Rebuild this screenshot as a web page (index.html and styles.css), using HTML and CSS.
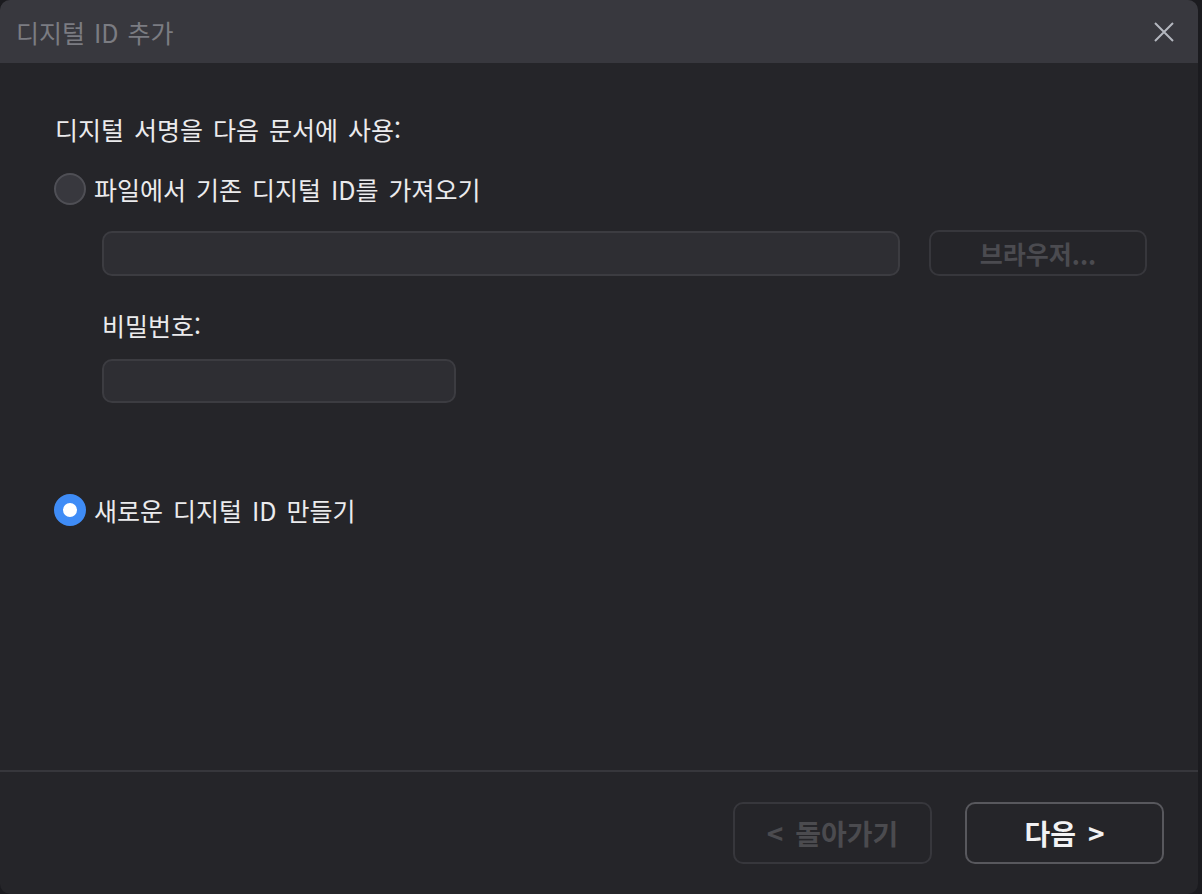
FILE: index.html
```html
<!DOCTYPE html>
<html lang="ko">
<head>
    <meta charset="UTF-8">
    <title>디지털 ID 추가</title>
    <link rel="stylesheet" href="styles.css">
</head>
<body>

<div class="dialog">
    <div class="titlebar">
        <span class="title">디지털 ID 추가</span>
        <button class="close" aria-label="닫기">
            <svg width="20" height="20" viewBox="0 0 20 20">
                <path d="M1 1 L19 19 M19 1 L1 19" stroke="#b4b7bf" stroke-width="2" fill="none"/>
            </svg>
        </button>
    </div>

    <div class="content">
        <p class="intro">디지털 서명을 다음 문서에 사용:</p>

        <label class="option">
            <span class="radio"></span>
            <span>파일에서 기존 디지털 ID를 가져오기</span>
        </label>

        <div class="file-group">
            <div class="file-row">
                <div class="field wide"></div>
                <button class="btn btn-browse" disabled>브라우저...</button>
            </div>
            <div class="label">비밀번호:</div>
            <div class="field short"></div>
        </div>

        <label class="option selected">
            <span class="radio"></span>
            <span>새로운 디지털 ID 만들기</span>
        </label>
    </div>

    <div class="footer">
        <button class="btn btn-nav disabled">&lt; 돌아가기</button>
        <button class="btn btn-nav next">다음 &gt;</button>
    </div>
</div>

</body>
</html>
```

FILE: styles.css
```css
* {
    margin: 0;
    padding: 0;
    box-sizing: border-box;
}

body {
    background-color: #1b1b1f;
    width: 1202px;
    height: 894px;
    overflow: hidden;
    font-family: "Noto Sans CJK KR", "Noto Sans", sans-serif;
}

.dialog {
    width: 1198px;
    height: 894px;
    background-color: #252529;
    border-radius: 10px;
    display: flex;
    flex-direction: column;
    overflow: hidden;
}

.titlebar {
    height: 63px;
    flex-shrink: 0;
    background-color: #38383e;
    display: flex;
    align-items: center;
    justify-content: space-between;
    padding: 0 24px 0 16px;
}

.title {
    color: #7b7c82;
    font-size: 25px;
    word-spacing: 2px;
}

.close {
    background: none;
    border: none;
    width: 20px;
    height: 20px;
    display: flex;
}

.content {
    flex: 1;
    padding: 50px 0 0 54px;
    color: #ebebed;
    font-size: 25px;
    word-spacing: 3px;
}

.intro {
    padding-left: 1px;
    line-height: 32px;
}

.option {
    display: flex;
    align-items: center;
    gap: 8px;
    margin-top: 28px;
    height: 32px;
}

.radio {
    width: 32px;
    height: 32px;
    border-radius: 50%;
    background-color: #38383e;
    border: 2px solid #4f4f55;
    flex-shrink: 0;
}

.option.selected .radio {
    background-color: #ffffff;
    border: 9px solid #3f8cf6;
}

.file-group {
    padding: 25px 0 0 48px;
}

.file-row {
    display: flex;
    gap: 29px;
    align-items: center;
}

.field {
    height: 45px;
    border-radius: 10px;
    background-color: #2e2e33;
    border: 2px solid #3c3c41;
}

.field.wide {
    width: 798px;
}

.field.short {
    width: 354px;
    height: 44px;
}

.label {
    margin: 33px 0 18px;
    line-height: 32px;
    word-spacing: 0;
}

.btn {
    background: none;
    border-radius: 10px;
    font-family: inherit;
    font-weight: bold;
}

.btn-browse {
    width: 218px;
    height: 46px;
    border: 2px solid #37373c;
    color: #4b4b50;
    font-size: 25px;
}

.option.selected {
    margin-top: 91px;
}

.footer {
    height: 124px;
    flex-shrink: 0;
    border-top: 2px solid #37373c;
    display: flex;
    justify-content: flex-end;
    align-items: flex-start;
    gap: 33px;
    padding: 30px 34px 0 0;
}

.btn-nav {
    width: 199px;
    height: 62px;
    font-size: 28px;
    word-spacing: 4px;
}

.btn-nav.disabled {
    border: 2px solid #37373c;
    color: #4b4b4f;
}

.btn-nav.next {
    border: 2px solid #58585d;
    color: #f2f2f4;
}
```
